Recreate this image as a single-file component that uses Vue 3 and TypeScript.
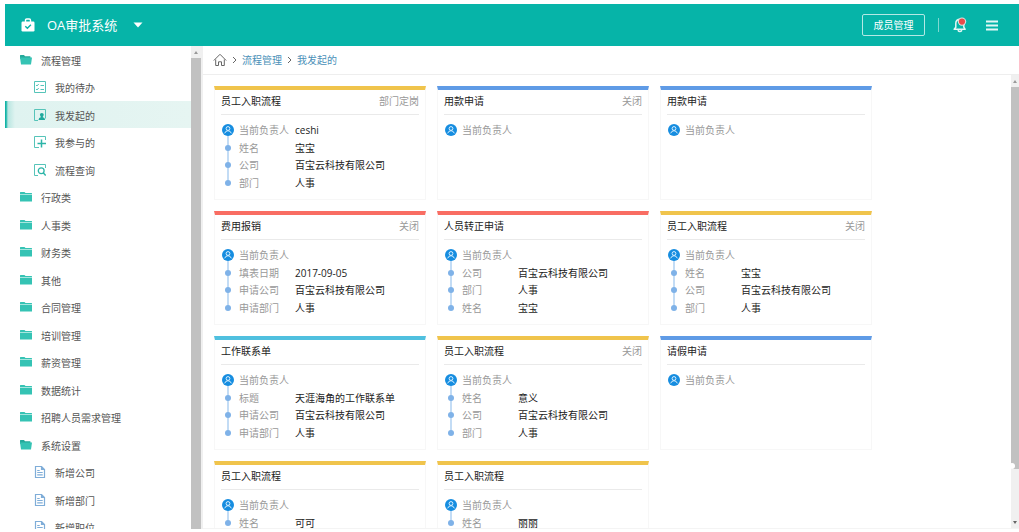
<script setup lang="ts">
type MenuIcon = 'open' | 'folder' | 'todo' | 'mine' | 'join' | 'search' | 'doc'

interface MenuItem {
  label: string
  icon: MenuIcon
  child?: boolean
  active?: boolean
}

interface Field {
  label: string
  value: string
}

interface Card {
  title: string
  color: 'yellow' | 'blue' | 'red' | 'cyan'
  status?: string
  owner?: string
  fields: Field[]
}

const menu: MenuItem[] = [
  { label: '流程管理', icon: 'open' },
  { label: '我的待办', icon: 'todo', child: true },
  { label: '我发起的', icon: 'mine', child: true, active: true },
  { label: '我参与的', icon: 'join', child: true },
  { label: '流程查询', icon: 'search', child: true },
  { label: '行政类', icon: 'folder' },
  { label: '人事类', icon: 'folder' },
  { label: '财务类', icon: 'folder' },
  { label: '其他', icon: 'folder' },
  { label: '合同管理', icon: 'folder' },
  { label: '培训管理', icon: 'folder' },
  { label: '薪资管理', icon: 'folder' },
  { label: '数据统计', icon: 'folder' },
  { label: '招聘人员需求管理', icon: 'folder' },
  { label: '系统设置', icon: 'open' },
  { label: '新增公司', icon: 'doc', child: true },
  { label: '新增部门', icon: 'doc', child: true },
  { label: '新增职位', icon: 'doc', child: true },
]

const company = '百宝云科技有限公司'

const cards: Card[] = [
  {
    title: '员工入职流程', color: 'yellow', status: '部门定岗', owner: 'ceshi',
    fields: [{ label: '姓名', value: '宝宝' }, { label: '公司', value: company }, { label: '部门', value: '人事' }],
  },
  { title: '用款申请', color: 'blue', status: '关闭', fields: [] },
  { title: '用款申请', color: 'blue', fields: [] },
  {
    title: '费用报销', color: 'red', status: '关闭',
    fields: [{ label: '填表日期', value: '2017-09-05' }, { label: '申请公司', value: company }, { label: '申请部门', value: '人事' }],
  },
  {
    title: '人员转正申请', color: 'red',
    fields: [{ label: '公司', value: company }, { label: '部门', value: '人事' }, { label: '姓名', value: '宝宝' }],
  },
  {
    title: '员工入职流程', color: 'yellow', status: '关闭',
    fields: [{ label: '姓名', value: '宝宝' }, { label: '公司', value: company }, { label: '部门', value: '人事' }],
  },
  {
    title: '工作联系单', color: 'cyan',
    fields: [{ label: '标题', value: '天涯海角的工作联系单' }, { label: '申请公司', value: company }, { label: '申请部门', value: '人事' }],
  },
  {
    title: '员工入职流程', color: 'yellow', status: '关闭',
    fields: [{ label: '姓名', value: '意义' }, { label: '公司', value: company }, { label: '部门', value: '人事' }],
  },
  { title: '请假申请', color: 'blue', fields: [] },
  { title: '员工入职流程', color: 'yellow', fields: [{ label: '姓名', value: '可可' }] },
  { title: '员工入职流程', color: 'yellow', fields: [{ label: '姓名', value: '丽丽' }] },
]
</script>

<template>
  <div class="shell">
    <header class="topbar">
      <svg class="brand-icon" viewBox="0 0 14 14" aria-hidden="true">
        <path d="M4.500 4V2.200Q4.500 1 5.700 1h2.600q1.200 0 1.200 1.200V4" fill="none" stroke="#fff" stroke-width="1.400" />
        <rect x="0.500" y="3.500" width="13" height="10" rx="1.200" fill="#fff" />
        <path d="M4.300 8.200l2.100 2.100 3.500-3.600" fill="none" stroke="#06b4a8" stroke-width="1.400" />
      </svg>
      <button class="brand" type="button">
        <span>OA审批系统</span>
        <svg class="caret" viewBox="0 0 10 6" aria-hidden="true"><path d="M0.500 0.500h9L5 5.500z" fill="#fff" /></svg>
      </button>
      <div class="actions">
        <button class="members" type="button">成员管理</button>
        <span class="rule"></span>
        <button class="icon-btn" type="button" aria-label="消息">
          <svg viewBox="0 0 14 16" aria-hidden="true">
            <path d="M7 2.200C4.300 2.200 2.800 4 2.800 6.200v4L1.200 12.300h11L10.800 10.200V7" fill="none" stroke="#e4f7f5" stroke-width="1.500" stroke-linejoin="round" />
            <path d="M4.800 13.200q2 2.800 4.200 0" fill="none" stroke="#e4f7f5" stroke-width="1.500" />
            <circle cx="9" cy="4.600" r="4.200" fill="#d9e6e0" />
            <circle cx="9" cy="4.600" r="3.100" fill="#e84b4b" />
          </svg>
        </button>
        <button class="icon-btn" type="button" aria-label="菜单">
          <svg viewBox="0 0 14 16" aria-hidden="true">
            <path d="M1 4.500h12M1 8.500h12M1 12.500h12" stroke="#e4f7f5" stroke-width="1.800" />
          </svg>
        </button>
      </div>
    </header>

    <div class="body">
      <nav class="sidebar">
        <a
          v-for="item in menu"
          :key="item.label"
          href="#"
          class="item"
          :class="{ child: item.child, active: item.active }"
        >
          <svg class="item-icon" viewBox="0 0 12 12" aria-hidden="true">
            <template v-if="item.icon === 'open'">
              <path d="M0 1.500q0-.5.5-.5H4l1 1.200h5q.5 0 .5.600V5H0z" fill="#25a99b" />
              <path d="M0 3.500h12l-1 7H1z" fill="#35c3b4" />
            </template>
            <template v-else-if="item.icon === 'folder'">
              <path d="M0 1.500q0-.5.5-.5H4.500l1 1h6q.5 0 .5.500V10.500H0z" fill="#35c3b4" />
              <path d="M0 3.500h12" stroke="#a7e6df" stroke-width="1" />
            </template>
            <g v-else-if="item.icon === 'todo'" fill="none" stroke="#56c4b9" stroke-width="1">
              <path d="M.5.500h11v11H.5z" />
              <path d="M2 4l1 1 1.700-2M2 8l1 1 1.700-2M6.500 4.500h3.500M6.500 8.500h3.500" />
            </g>
            <g v-else-if="item.icon === 'mine'">
              <path d="M4 11.500H.5V.5h11v9" fill="none" stroke="#56c4b9" />
              <circle cx="7.800" cy="5.800" r="1.900" fill="#1ea99d" />
              <path d="M4.500 11q.2-2.500 2.300-2.800V7h2v1.200q2.100.3 2.300 2.800z" fill="#1ea99d" />
            </g>
            <g v-else-if="item.icon === 'join'" fill="none" stroke="#56c4b9">
              <path d="M5 11.500H.5V.5h11V4" />
              <path d="M7.500 3.500v8M3.500 7.500h8.500" stroke="#2cb5a8" stroke-width="1.500" />
            </g>
            <g v-else-if="item.icon === 'search'" fill="none" stroke="#56c4b9">
              <path d="M4 11.500H.5V.5h11V4" />
              <circle cx="7.200" cy="6.700" r="2.900" stroke="#2cb5a8" stroke-width="1.300" />
              <path d="M9.200 8.800l2.500 2.700" stroke="#2cb5a8" stroke-width="1.400" />
            </g>
            <g v-else fill="none" stroke="#7fadd8" stroke-width="1.200">
              <path d="M1.500.5h6l3 3v8h-9zM7.500.5v3h3" />
              <path d="M3.200 4.500h2.500M3.200 6.500h5.500M3.200 8.800h5.500" />
            </g>
          </svg>
          <span class="item-label">{{ item.label }}</span>
        </a>
      </nav>

      <div class="scroll side-scroll" aria-hidden="true">
        <span class="arrow up"></span>
        <span class="thumb"></span>
      </div>

      <main class="main">
        <div class="crumbs">
          <a href="#" class="home" aria-label="首页">
            <svg viewBox="0 0 14 14" aria-hidden="true">
              <path d="M.8 7.500L7 1.300l6.200 6.200M2.700 6.500v6h2.800V8.800h3v3.700h2.800v-6" fill="none" stroke="#666" stroke-width="1" stroke-linejoin="round" />
            </svg>
          </a>
          <svg class="chev" viewBox="0 0 5 8" aria-hidden="true"><path d="M1 1l3 3-3 3" fill="none" stroke="#666" /></svg>
          <a href="#">流程管理</a>
          <svg class="chev" viewBox="0 0 5 8" aria-hidden="true"><path d="M1 1l3 3-3 3" fill="none" stroke="#666" /></svg>
          <a href="#">我发起的</a>
        </div>

        <div class="content">
          <div class="cards">
            <article v-for="(card, i) in cards" :key="i" class="card" :class="card.color">
              <div class="card-head">
                <span class="title">{{ card.title }}</span>
                <span v-if="card.status" class="status">{{ card.status }}</span>
              </div>
              <ul class="rows">
                <li class="row">
                  <svg class="avatar" viewBox="0 0 12 12" aria-hidden="true">
                    <circle cx="6" cy="6" r="6" fill="#168de0" />
                    <circle cx="6" cy="4.500" r="1.900" fill="none" stroke="#d7efff" />
                    <path d="M2.700 9.300Q3.500 6.700 6 6.700t3.300 2.600" fill="none" stroke="#d7efff" />
                  </svg>
                  <span class="label">当前负责人</span>
                  <span class="value">{{ card.owner }}</span>
                </li>
                <li v-for="field in card.fields" :key="field.label" class="row linked">
                  <span class="dot"></span>
                  <span class="label">{{ field.label }}</span>
                  <span class="value">{{ field.value }}</span>
                </li>
              </ul>
            </article>
          </div>

          <div class="scroll main-scroll" aria-hidden="true">
            <span class="arrow up"></span>
            <span class="thumb"><span class="knob"></span></span>
            <span class="rest"></span>
            <span class="arrow down"></span>
          </div>
        </div>
      </main>
    </div>
  </div>
</template>

<style>
body {
  background: #fff;
  overflow: hidden;
}
</style>

<style scoped>
.shell {
  box-sizing: border-box;
  height: 100vh;
  padding: 4px 0 3px 5px;
  display: flex;
  flex-direction: column;
  font-family: "Open Sans", "Noto Sans CJK SC", sans-serif;
  font-size: 10px;
  line-height: 16px;
  color: #333;
}
.shell *,
.shell *::before {
  box-sizing: border-box;
}
a {
  color: inherit;
  text-decoration: none;
}
button {
  font: inherit;
  color: #fff;
  background: none;
  border: 0;
  padding: 0;
}
svg {
  display: block;
  flex: none;
}

.topbar {
  flex: none;
  height: 42px;
  padding: 0 20px 0 16px;
  display: flex;
  align-items: center;
  background: #06b4a8;
  color: #fff;
}
.brand-icon {
  width: 14px;
  height: 14px;
}
.brand {
  margin-left: 12px;
  display: flex;
  align-items: center;
  gap: 16px;
  font-size: 13px;
  line-height: 20px;
}
.caret {
  width: 10px;
  height: 6px;
}
.actions {
  margin-left: auto;
  display: flex;
  align-items: center;
}
.members {
  width: 63px;
  height: 22px;
  border: 1px solid #b4e9e5;
  border-radius: 2px;
}
.rule {
  width: 1px;
  height: 14px;
  margin: 0 14px 0 13px;
  background: #7fd8d1;
}
.icon-btn svg {
  width: 14px;
  height: 16px;
}
.icon-btn + .icon-btn {
  margin-left: 18px;
}

.body {
  flex: 1;
  min-height: 0;
  display: flex;
}
.sidebar {
  flex: none;
  width: 186px;
  overflow: hidden;
  color: #555;
}
.item {
  height: 27px;
  padding-left: 15px;
  display: flex;
  align-items: center;
  gap: 9px;
}
.item:nth-child(even) {
  height: 28px;
}
.item-icon {
  width: 12px;
  height: 12px;
}
.item-label {
  padding-top: 2px;
}
.item.child {
  padding-left: 29px;
}
.item.active {
  background: linear-gradient(90deg, #12b3a6 0, #12b3a6 1px, #b9e6e1 3px, #dff3f0 10px, #e6f5f2 100%);
}

.scroll {
  flex: none;
  display: flex;
  flex-direction: column;
  background: #f0f0f0;
}
.arrow {
  flex: none;
  height: 12px;
  display: flex;
  align-items: center;
  justify-content: center;
}
.arrow::before {
  content: "";
  border: 2px solid transparent;
}
.arrow.up::before {
  border-top: 0;
  border-bottom: 3px solid #999;
}
.arrow.down::before {
  border-bottom: 0;
  border-top: 3px solid #666;
}
.thumb {
  flex: 1;
  background: #c1c1c1;
}
.side-scroll {
  width: 12px;
  padding-right: 2px;
}

.main {
  flex: 1;
  min-width: 0;
  display: flex;
  flex-direction: column;
}
.crumbs {
  flex: none;
  height: 29px;
  padding-left: 10px;
  display: flex;
  align-items: center;
  gap: 5px;
  border-bottom: 1px solid #eee;
  color: #4a90b8;
}
.home svg {
  width: 14px;
  height: 14px;
}
.chev {
  width: 5px;
  height: 8px;
}
.content {
  flex: 1;
  min-height: 0;
  display: flex;
  overflow: hidden;
  border-bottom: 1px solid #f4f4f4;
}
.cards {
  flex: 1;
  min-width: 0;
  padding: 11px 0 0 11px;
  display: grid;
  grid-template-columns: repeat(auto-fill, 212px);
  grid-auto-rows: 114px;
  align-content: start;
  gap: 11px;
}
.card {
  padding: 0 6px;
  border: 1px solid #f7f7f7;
  border-top: 4px solid;
}
.yellow {
  border-top-color: #f0c44c;
}
.blue {
  border-top-color: #5f9be6;
}
.red {
  border-top-color: #f96d63;
}
.cyan {
  border-top-color: #50c0df;
}
.card-head {
  height: 25px;
  padding-bottom: 2px;
  display: flex;
  align-items: center;
  justify-content: space-between;
  border-bottom: 1px solid #eaeaea;
}
.title {
  color: #222;
}
.status,
.label {
  color: #999;
}
.rows {
  list-style: none;
  margin: 0;
  padding: 6px 0 0;
}
.row {
  position: relative;
  height: 17px;
  display: grid;
  grid-template-columns: 14px 52px 1fr;
  column-gap: 4px;
  align-items: center;
  white-space: nowrap;
}
.row:nth-child(odd) {
  height: 18px;
}
.avatar {
  position: relative;
  z-index: 1;
  width: 12px;
  height: 12px;
  justify-self: center;
}
.dot {
  position: relative;
  z-index: 1;
  width: 6px;
  height: 6px;
  border-radius: 50%;
  background: #7fb2e8;
  justify-self: center;
}
.linked::before {
  content: "";
  position: absolute;
  left: 6px;
  bottom: 8px;
  width: 2px;
  height: 18px;
  background: #c3dcf5;
}
.value {
  color: #222;
}
.main-scroll {
  width: 8px;
}
.main-scroll .thumb {
  position: relative;
  flex: 383;
}
.knob {
  position: absolute;
  left: -2px;
  bottom: 0;
  width: 6px;
  height: 6px;
  border-radius: 50%;
  background: #fff;
}
.rest {
  flex: 47;
}
</style>
